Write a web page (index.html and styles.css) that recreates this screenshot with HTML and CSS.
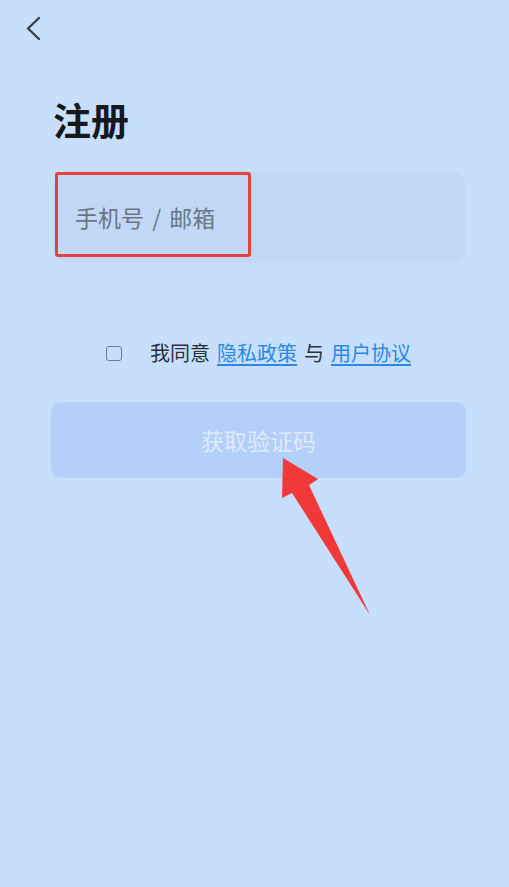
FILE: index.html
```html
<!DOCTYPE html>
<html lang="zh-CN">
<head>
    <meta charset="UTF-8">
    <meta name="viewport" content="width=device-width, initial-scale=1.0">
    <title>注册</title>
    <link rel="stylesheet" href="styles.css">
</head>
<body>
    <div class="page">
        <div class="topbar">
            <svg class="back" width="20" height="28" viewBox="0 0 20 28">
                <polyline points="15,3 4,13.5 15,24" fill="none" stroke="#3a3f47" stroke-width="2.4" stroke-linecap="round" stroke-linejoin="round"/>
            </svg>
        </div>

        <h1 class="title">注册</h1>

        <div class="field">
            <span class="placeholder">手机号 / 邮箱</span>
        </div>

        <div class="agree">
            <span class="checkbox"></span>
            <span class="agree-text">我同意 <a href="#">隐私政策</a> 与 <a href="#">用户协议</a></span>
        </div>

        <button type="button" class="submit">获取验证码</button>
    </div>

    <!-- annotations -->
    <div class="mark"></div>
    <svg class="arrow" width="509" height="887" viewBox="0 0 509 887">
        <polygon points="283,458 318,479 309,485 370,615 292,493 282,498" fill="#f2393a"/>
    </svg>
</body>
</html>
```

FILE: styles.css
```css
body {
    margin: 0;
    min-height: 887px;
    background-color: #c7dffd;
    font-family: "Noto Sans CJK SC", "Noto Sans", sans-serif;
    color: #2a2f37;
    position: relative;
    overflow: hidden;
}

.page {
    padding: 0 43px 0 51px;
}

.topbar {
    height: 58px;
    display: flex;
    align-items: center;
    margin-left: -27px;
}

.back {
    display: block;
}

.title {
    margin: 39px 0 0 2px;
    font-size: 38px;
    line-height: 44px;
    font-weight: 700;
    color: #15181d;
}

.field {
    margin-top: 30px;
    margin-left: 3px;
    height: 92px;
    border-radius: 16px;
    background-color: #c2d8f6;
    display: flex;
    align-items: center;
    padding-left: 21px;
}

.placeholder {
    font-size: 23px;
    word-spacing: 3px;
    color: #6b7584;
}

.agree {
    margin-top: 76px;
    height: 28px;
    display: flex;
    align-items: center;
    justify-content: center;
    gap: 28px;
}

.checkbox {
    width: 14px;
    height: 13px;
    border: 1.5px solid #6f7886;
    border-radius: 3px;
}

.agree-text {
    font-size: 20px;
    line-height: 28px;
    word-spacing: 2.5px;
}

.agree-text a {
    color: #2b88e6;
    text-decoration: underline;
    text-underline-offset: 3px;
}

.submit {
    display: block;
    width: 100%;
    margin-top: 35px;
    height: 76px;
    border: none;
    border-radius: 10px;
    background-color: #b4cff9;
    color: #deeafd;
    font-family: inherit;
    font-size: 23px;
}

.mark {
    position: absolute;
    left: 55px;
    top: 172px;
    width: 190px;
    height: 79px;
    border: 3px solid #e8403f;
    border-radius: 3px;
}

.arrow {
    position: absolute;
    left: 0;
    top: 0;
}
```
